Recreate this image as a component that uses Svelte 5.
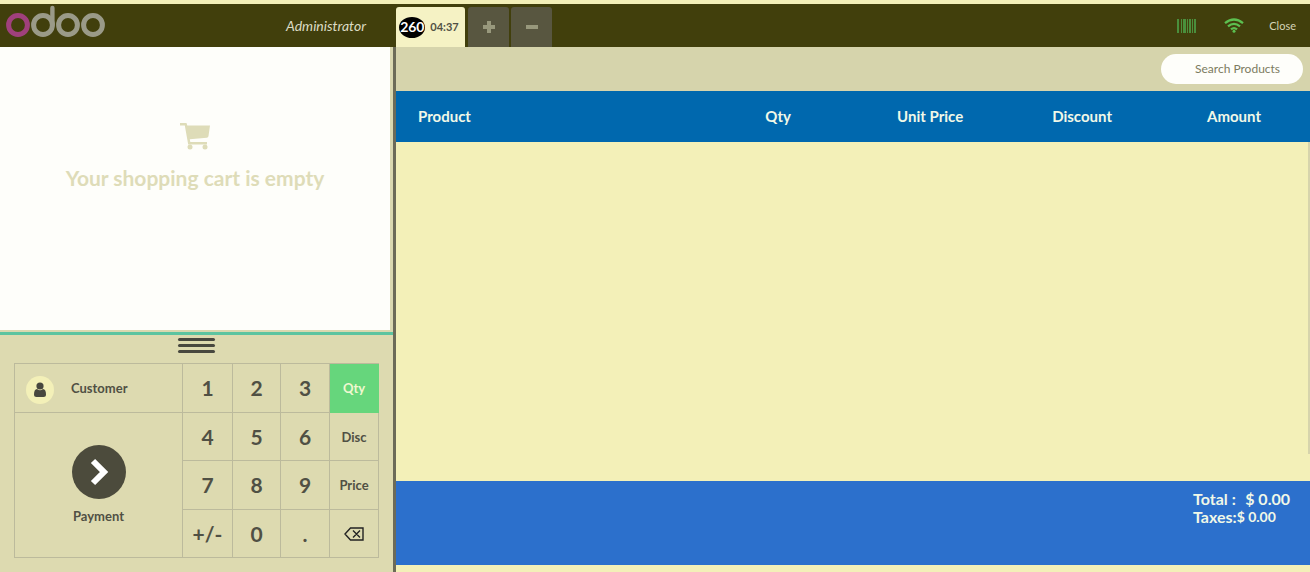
<script>
  const keys = [
    '1', '2', '3', 'Qty',
    '4', '5', '6', 'Disc',
    '7', '8', '9', 'Price',
    '+/-', '0', '.', 'back'
  ];
  const modes = ['Qty', 'Disc', 'Price'];
  const bars = [[0, 2], [4, 1], [6, 3], [10, 1], [12, 2], [15, 1], [17, 2]];
  let mode = $state('Qty');
</script>

<div class="pos">
  <header class="topbar">
    <div class="brand">
      <svg class="logo" width="100" height="34" viewBox="0 0 100 34" fill="none" stroke-width="5" role="img" aria-label="odoo">
        <circle cx="12" cy="21" r="9.4" stroke="#a0407c" />
        <g stroke="#9a9a88">
          <circle cx="37" cy="21" r="9.4" />
          <circle cx="62" cy="21" r="9.4" />
          <circle cx="87" cy="21" r="9.4" />
          <path d="M46.4 21V4" stroke-width="4.4" stroke-linecap="round" />
        </g>
      </svg>
      <span class="user">Administrator</span>
    </div>
    <nav class="orders">
      <button class="order"><span class="seq">260</span><span class="time">04:37</span></button>
      <button class="square" aria-label="New order">
        <svg width="14" height="14" viewBox="0 0 14 14"><path d="M7 1v12M1 7h12" stroke="#98987c" stroke-width="4" /></svg>
      </button>
      <button class="square" aria-label="Delete order">
        <svg width="14" height="14" viewBox="0 0 14 14"><path d="M1 7h12" stroke="#98987c" stroke-width="4" /></svg>
      </button>
    </nav>
    <div class="status">
      <svg width="20" height="14" viewBox="0 0 20 14" fill="#4a8f3c" role="img" aria-label="Scanner">
        {#each bars as [x, w]}<rect {x} y="0" width={w} height="14" />{/each}
      </svg>
      <svg class="wifi" width="20" height="15" viewBox="0 0 20 15" fill="none" stroke="#5cc050" stroke-width="2.3" role="img" aria-label="Connected">
        <path d="M1 5.2Q10-2.2 19 5.2M4 8.4Q10 3.4 16 8.4M7 11.4Q10 8.8 13 11.4" />
        <circle cx="10" cy="13.2" r="1.5" fill="#5cc050" stroke="none" />
      </svg>
      <button class="close">Close</button>
    </div>
  </header>

  <div class="content">
    <aside class="left">
      <div class="cart">
        <svg width="30" height="28" viewBox="0 0 30 28" fill="#dedcb8" aria-hidden="true">
          <path d="M0 1h6.500l.8 2.500H30L28.500 14Q28.300 15.500 26.800 15.700L9.800 17.300l.5 2.700H27v2.500H8.200L4.800 3.500H0z" />
          <circle cx="10" cy="25" r="2.500" /><circle cx="25" cy="25" r="2.500" />
        </svg>
        <h1>Your shopping cart is empty</h1>
      </div>
      <div class="pad">
        <div class="grip" aria-hidden="true"><i></i><i></i><i></i></div>
        <div class="keys">
          <button class="customer">
            <span class="avatar">
              <svg width="12" height="15" viewBox="0 0 12 15" fill="#48483f" aria-hidden="true">
                <circle cx="6" cy="4" r="3.600" /><path d="M3 7Q6 9.400 9 7Q12 7.400 12 12.500Q12 15 9.500 15h-7Q0 15 0 12.500Q0 7.400 3 7z" />
              </svg>
            </span>
            <span class="label">Customer</span>
          </button>
          <button class="payment">
            <span class="go">
              <svg width="20" height="28" viewBox="0 0 20 28" fill="none" aria-hidden="true"><path d="M4 3l11 11L4 25" stroke="#fff" stroke-width="6" /></svg>
            </span>
            <span>Payment</span>
          </button>
          <div class="numbers">
            {#each keys as key}
              {#if key === 'back'}
                <button aria-label="Backspace">
                  <svg width="20" height="14" viewBox="0 0 20 14" fill="none" stroke="#222" stroke-width="1.400" aria-hidden="true">
                    <path d="M6.500 1H19v12H6.500L1 7zM9 3.500l7 7M16 3.500l-7 7" />
                  </svg>
                </button>
              {:else if modes.includes(key)}
                <button class="mode" class:selected={mode === key} onclick={() => (mode = key)}>{key}</button>
              {:else}
                <button>{key}</button>
              {/if}
            {/each}
          </div>
        </div>
      </div>
    </aside>

    <main class="right">
      <div class="searchbar">
        <input type="search" placeholder="Search Products" aria-label="Search Products" />
      </div>
      <div class="lines">
        <table>
          <thead>
            <tr><th class="product">Product</th><th>Qty</th><th>Unit Price</th><th>Discount</th><th>Amount</th></tr>
          </thead>
        </table>
        <div class="thumb" aria-hidden="true"></div>
      </div>
      <footer class="summary">
        <div class="sums">
          <div class="total"><span>Total :</span><span>$ 0.00</span></div>
          <div class="taxes"><span>Taxes:</span><span class="tax">$ 0.00</span></div>
        </div>
      </footer>
    </main>
  </div>
</div>

<style>
  :global(body) { margin: 0; background: #f3f0b8; }
  .pos {
    box-sizing: border-box;
    min-height: 100vh;
    padding-top: 4px;
    display: flex;
    flex-direction: column;
    background: #f3f0b8;
    color: #505044;
    font: 14px/18px Lato, "Liberation Sans", sans-serif;
  }
  button { font: inherit; color: inherit; background: none; border: 0; padding: 0; margin: 0; cursor: pointer; }
  svg { display: block; flex: none; }

  .topbar { display: flex; height: 43px; background: #413f0c; }
  .brand {
    box-sizing: border-box; width: 396px; flex: none; padding: 0 30px 0 6px;
    display: flex; justify-content: space-between;
  }
  .user { color: #dcdcc4; font-size: 14px; font-style: italic; line-height: 44px; }
  .orders { display: flex; gap: 2px; padding-top: 3px; flex: 1; }
  .order {
    box-sizing: border-box; width: 69px; margin-right: 1px; padding-right: 3px;
    display: flex; align-items: center; justify-content: center; gap: 5px;
    background: #f5f2c4; border-radius: 3px 3px 0 0; color: #505044; font-weight: bold;
  }
  .seq {
    width: 26px; height: 21px; border-radius: 50%; background: #000; color: #fff;
    display: flex; align-items: center; justify-content: center; font-size: 14px;
  }
  .time { font-size: 11px; }
  .square {
    width: 41px; background: #585640; border-radius: 3px 3px 0 0;
    display: flex; align-items: center; justify-content: center;
  }
  .status { display: flex; align-items: center; padding-right: 14px; }
  .wifi { margin: 0 25px 0 27px; }
  .close { color: #d4d4b8; font-size: 11px; }

  .content { flex: 1; display: flex; }
  .left {
    box-sizing: border-box; width: 396px; flex: none; border-right: 3px solid #6c6b58;
    display: flex; flex-direction: column;
  }
  .cart {
    flex: 1; background: #fefefa; border-right: 3px solid #dad8b0; border-bottom: 2px solid #dad8b0;
    display: flex; flex-direction: column; align-items: center; padding-top: 75px;
  }
  h1 { margin: 15px 0 0; font-size: 21px; line-height: 26px; font-weight: bold; color: #dedcb8; }
  .pad { border-top: 3px solid #5cc4a0; background: #dddab0; padding: 3px 14px 14px; }
  .grip { display: flex; flex-direction: column; align-items: center; gap: 3px; padding-bottom: 10px; }
  .grip i { width: 37px; height: 3px; border-radius: 2px; background: #48483f; }
  .keys {
    display: grid; grid-template-columns: 168px 1fr; grid-template-rows: 49px 145px;
    border-left: 1px solid #bcba9c; border-top: 1px solid #bcba9c;
  }
  .keys button { border-right: 1px solid #bcba9c; border-bottom: 1px solid #bcba9c; }
  .customer { display: flex; align-items: center; padding-left: 11px; font-size: 13px; font-weight: bold; }
  .avatar {
    width: 28px; height: 28px; border-radius: 50%; background: #f3f0b8;
    display: flex; align-items: center; justify-content: center; margin-top: 3px;
  }
  .label { margin-left: 17px; }
  .payment {
    display: flex; flex-direction: column; align-items: center; justify-content: center; gap: 8px;
    font-size: 13px; font-weight: bold;
  }
  .go {
    width: 54px; height: 54px; border-radius: 50%; background: #4c4b3c;
    display: flex; align-items: center; justify-content: center;
  }
  .numbers {
    grid-column: 2; grid-row: 1 / 3;
    display: grid; grid-template-columns: 50fr 48fr 49fr 49fr; grid-template-rows: 49px 48px 49px 48px;
  }
  .numbers button { display: flex; align-items: center; justify-content: center; font-size: 21px; font-weight: bold; }
  .numbers .mode { font-size: 13px; }
  .numbers .selected { background: #66d67c; color: #f0f8d0; border-color: #66d67c; }

  .right { flex: 1; min-width: 0; display: flex; flex-direction: column; padding-bottom: 7px; }
  .searchbar { display: flex; justify-content: flex-end; padding: 7px 7px 7px 0; background: #d6d4ac; }
  input {
    box-sizing: border-box; width: 142px; height: 30px; border: 0; border-radius: 15px; background: #fefefa;
    padding: 0 10px 2px 34px; font: 12px Lato, "Liberation Sans", sans-serif; color: #505044;
  }
  input::placeholder { color: #7c7b60; opacity: 1; }
  .lines { flex: 1; display: flex; flex-direction: column; }
  .thumb { flex: 1; align-self: flex-end; width: 2px; margin-bottom: 27px; background: #d6d4ac; }
  table { width: 100%; border-collapse: collapse; table-layout: fixed; }
  th {
    height: 49px; padding: 0 0 2px; background: #0068ae; color: #f0f8e8;
    font-size: 15px; line-height: 18px; font-weight: bold; text-align: center;
  }
  th.product { width: 33.500%; text-align: left; padding-left: 22px; box-sizing: border-box; }
  .summary {
    box-sizing: border-box; min-height: 84px; padding: 9px 20px 0; background: #2c70cc; color: #f0f8e8;
    display: flex; justify-content: flex-end; font-weight: bold;
  }
  .sums { width: 97px; }
  .total { display: flex; justify-content: space-between; font-size: 16px; }
  .taxes { display: flex; font-size: 16px; }
  .tax { font-size: 14px; }
</style>
